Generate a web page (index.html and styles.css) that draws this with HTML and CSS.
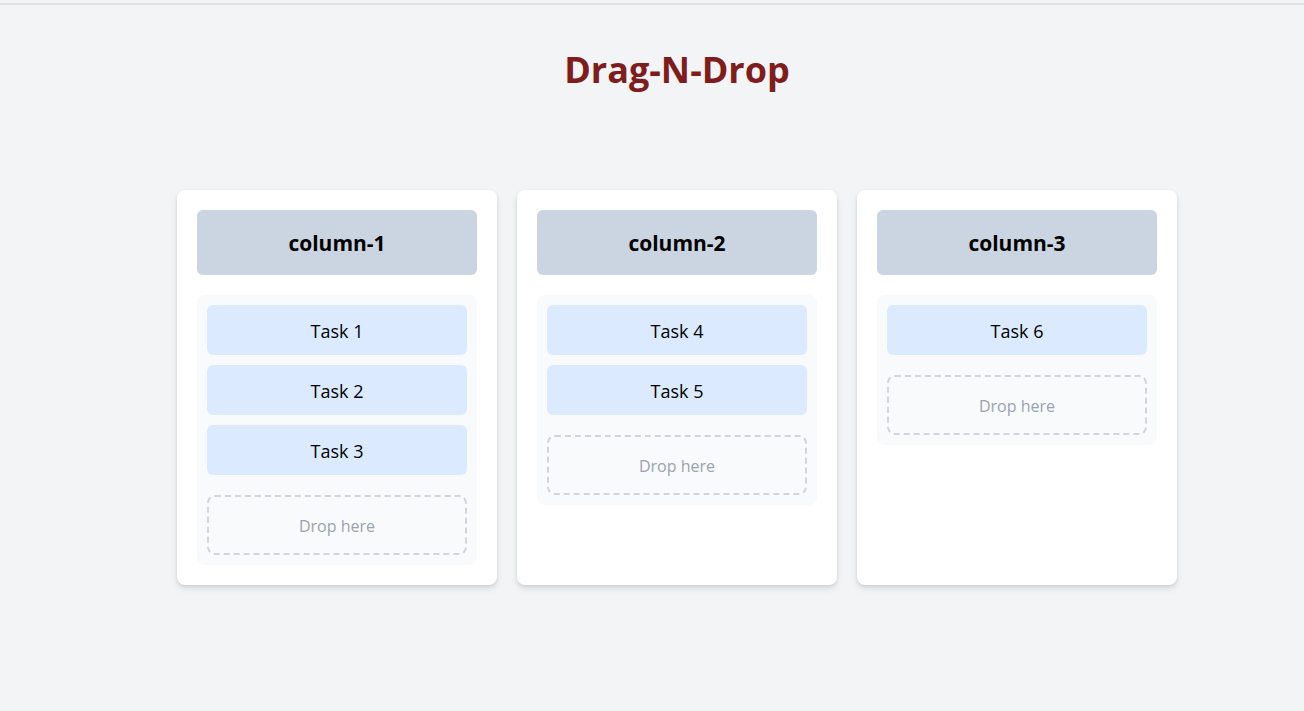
FILE: index.html
```html
<!DOCTYPE html>
<html lang="en">
<head>
    <meta charset="UTF-8">
    <meta name="viewport" content="width=device-width, initial-scale=1.0">
    <title>Drag-N-Drop</title>
    <link rel="stylesheet" href="styles.css">
</head>
<body>
    <div class="app">
        <h1 class="title">Drag-N-Drop</h1>
        <div class="board">
            <div class="column">
                <div class="column-header">column-1</div>
                <div class="task-list">
                    <div class="task">Task 1</div>
                    <div class="task">Task 2</div>
                    <div class="task">Task 3</div>
                    <div class="drop-zone">Drop here</div>
                </div>
            </div>
            <div class="column">
                <div class="column-header">column-2</div>
                <div class="task-list">
                    <div class="task">Task 4</div>
                    <div class="task">Task 5</div>
                    <div class="drop-zone">Drop here</div>
                </div>
            </div>
            <div class="column">
                <div class="column-header">column-3</div>
                <div class="task-list">
                    <div class="task">Task 6</div>
                    <div class="drop-zone">Drop here</div>
                </div>
            </div>
        </div>
    </div>
</body>
</html>
```

FILE: styles.css
```css
body {
    font-family: "Open Sans", Arial, sans-serif;
    background: #f3f4f6;
    margin: 0;
    padding-top: 3px;
    height: 708px;
}
.app {
    border-top: 2px solid #e2e2e2;
    padding-left: 50px;
    height: 100%;
}
.title {
    text-align: center;
    color: #7f1d1d;
    font-size: 36px;
    font-weight: bold;
    margin: 0;
    padding-top: 40px;
    line-height: 50px;
}
.board {
    display: flex;
    justify-content: center;
    gap: 20px;
    margin-top: 95px;
}
.column {
    background: white;
    width: 320px;
    box-sizing: border-box;
    padding: 20px;
    border-radius: 8px;
    box-shadow: 0px 4px 6px rgba(0, 0, 0, 0.1), 0px 1px 3px rgba(0, 0, 0, 0.08);
}
.column-header {
    background: #cbd5e1;
    height: 64px;
    padding-top: 1px;
    border-radius: 6px;
    display: flex;
    justify-content: center;
    align-items: center;
    font-size: 21px;
    font-weight: bold;
    color: black;
    margin-bottom: 20px;
}
.task-list {
    background: #f8fafc;
    border-radius: 8px;
    padding: 10px;
    display: flex;
    flex-direction: column;
    gap: 10px;
}
.task {
    background: #dbeafe;
    height: 49px;
    padding-top: 1px;
    border-radius: 6px;
    display: flex;
    justify-content: center;
    align-items: center;
    font-size: 18px;
    color: black;
}
.drop-zone {
    margin-top: 10px;
    height: 60px;
    padding-top: 2px;
    box-sizing: border-box;
    border: 2px dashed #d1d5db;
    border-radius: 8px;
    display: flex;
    justify-content: center;
    align-items: center;
    font-size: 16px;
    color: #9ca3af;
}
```
